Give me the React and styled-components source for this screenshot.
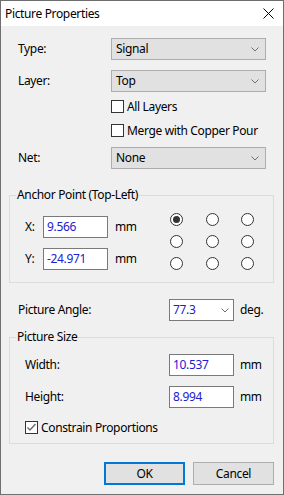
import React from "react";
import styled, { createGlobalStyle } from "styled-components";

const Global = createGlobalStyle`
  html, body { margin: 0; padding: 0; background: #ffffff; }
  body {
    font-family: "Noto Sans", "Open Sans", sans-serif;
    font-size: 12px;
    letter-spacing: -0.35px;
    color: #000;
  }
  * { box-sizing: border-box; }
`;

const Window = styled.div`
  width: 284px;
  height: 495px;
  border: 1px solid #6f6f6f;
  background: #f0f0f0;
  display: flex;
  flex-direction: column;
`;

const TitleBar = styled.div`
  flex: none;
  height: 25px;
  background: #ffffff;
  display: flex;
  align-items: center;
  justify-content: space-between;
  padding: 0 9px 0 4px;
`;

const Title = styled.span`
  line-height: 16px;
`;

const CloseIcon = styled.svg`
  display: block;
  width: 11px;
  height: 11px;
`;

const Body = styled.div`
  flex: 1;
  display: flex;
  flex-direction: column;
  padding: 0 9px 0 8px;
`;

const FieldRow = styled.div`
  display: flex;
  align-items: center;
  height: 22px;
  margin-top: ${(p) => p.$mt || 0}px;
  padding-left: ${(p) => p.$indent || 0}px;
`;

const Label = styled.span`
  flex: none;
  width: ${(p) => p.$w}px;
  line-height: 16px;
  white-space: nowrap;
`;

const Combo = styled.div`
  flex: none;
  width: ${(p) => p.$w}px;
  height: 22px;
  display: flex;
  align-items: center;
  justify-content: space-between;
  padding: ${(p) => (p.$edit ? "0 4px 0 3px" : "0 6px 0 4px")};
  background: ${(p) => (p.$edit ? "#ffffff" : "#e1e1e1")};
  border: 1px solid ${(p) => (p.$edit ? "#7a7a7a" : "#adadad")};
  color: ${(p) => (p.$edit ? "#2020d0" : "#000")};
  line-height: 16px;
`;

const TextBox = styled.div`
  flex: none;
  width: 65px;
  height: 22px;
  display: flex;
  align-items: center;
  padding-left: 3px;
  background: #ffffff;
  border: 1px solid #7a7a7a;
  color: #2020d0;
  line-height: 16px;
`;

const Unit = styled.span`
  margin-left: ${(p) => p.$ml || 6}px;
  line-height: 16px;
`;

const CheckRow = styled.div`
  display: flex;
  align-items: center;
  height: 13px;
  margin-top: ${(p) => p.$mt || 0}px;
  margin-left: ${(p) => p.$ml || 0}px;
  gap: 3px;
  line-height: 16px;
  white-space: nowrap;
`;

const CheckBox = styled.span`
  flex: none;
  width: 13px;
  height: 13px;
  border: 1px solid #333333;
  background: #ffffff;
  display: flex;
  align-items: center;
  justify-content: center;
`;

const Group = styled.div`
  border: 1px solid #dcdcdc;
  margin-top: ${(p) => p.$mt || 0}px;
  padding-bottom: ${(p) => p.$pb || 0}px;
`;

const Legend = styled.div`
  width: fit-content;
  margin: -9px 0 0 6px;
  padding: 0 1px;
  background: #f0f0f0;
  line-height: 16px;
  white-space: nowrap;
`;

const AnchorBody = styled.div`
  display: flex;
  align-items: flex-start;
`;

const CoordCol = styled.div`
  flex: none;
  width: 160px;
  padding: 13px 0 0 15px;
  display: flex;
  flex-direction: column;
  gap: 10px;
`;

const RadioGrid = styled.div`
  display: grid;
  grid-template-columns: repeat(3, 13px);
  column-gap: 22.5px;
  row-gap: 9px;
  padding-top: 10px;
`;

const Radio = styled.span`
  width: 13px;
  height: 13px;
  border-radius: 50%;
  border: 1px solid #333333;
  background: #ffffff;
  display: flex;
  align-items: center;
  justify-content: center;
  &::after {
    content: "";
    width: 7px;
    height: 7px;
    border-radius: 50%;
    background: ${(p) => (p.$checked ? "#333333" : "transparent")};
  }
`;

const ButtonBar = styled.div`
  display: flex;
  justify-content: flex-end;
  gap: 8px;
  margin-top: 18px;
`;

const Button = styled.div`
  width: 81px;
  height: 23px;
  display: flex;
  align-items: center;
  justify-content: center;
  background: #e1e1e1;
  border: ${(p) => (p.$default ? "2px solid #0078d7" : "1px solid #adadad")};
  line-height: 16px;
`;

const Chevron = () => (
  <svg width="8" height="5" viewBox="0 0 8 5" style={{ display: "block" }}>
    <polyline points="0.5,0.5 4,4 7.5,0.5" fill="none" stroke="#707070" strokeWidth="1" />
  </svg>
);

const Check = () => (
  <svg width="11" height="11" viewBox="0 0 11 11" style={{ display: "block" }}>
    <polyline points="1.5,5.5 4,8 9.5,2" fill="none" stroke="#6a6a6a" strokeWidth="1.4" />
  </svg>
);

export default function App() {
  const radios = Array.from({ length: 9 }, (_, i) => i);
  return (
    <>
      <Global />
      <Window>
        <TitleBar>
          <Title>Picture Properties</Title>
          <CloseIcon viewBox="0 0 11 11">
            <path d="M0.5 0.5 L10.5 10.5 M10.5 0.5 L0.5 10.5" stroke="#000" strokeWidth="1" />
          </CloseIcon>
        </TitleBar>
        <Body>
          <FieldRow $mt={12} $indent={9}>
            <Label $w={93}>Type:</Label>
            <Combo $w={155}>
              <span>Signal</span>
              <Chevron />
            </Combo>
          </FieldRow>
          <FieldRow $mt={10} $indent={9}>
            <Label $w={93}>Layer:</Label>
            <Combo $w={155}>
              <span>Top</span>
              <Chevron />
            </Combo>
          </FieldRow>
          <CheckRow $mt={8} $ml={102}>
            <CheckBox />
            <span>All Layers</span>
          </CheckRow>
          <CheckRow $mt={11} $ml={102}>
            <CheckBox />
            <span>Merge with Copper Pour</span>
          </CheckRow>
          <FieldRow $mt={10} $indent={9}>
            <Label $w={93}>Net:</Label>
            <Combo $w={155}>
              <span>None</span>
              <Chevron />
            </Combo>
          </FieldRow>

          <Group $mt={26} $pb={12}>
            <Legend>Anchor Point (Top-Left)</Legend>
            <AnchorBody>
              <CoordCol>
                <FieldRow>
                  <Label $w={18}>X:</Label>
                  <TextBox>9.566</TextBox>
                  <Unit $ml={7}>mm</Unit>
                </FieldRow>
                <FieldRow>
                  <Label $w={18}>Y:</Label>
                  <TextBox>-24.971</TextBox>
                  <Unit $ml={7}>mm</Unit>
                </FieldRow>
              </CoordCol>
              <RadioGrid>
                {radios.map((i) => (
                  <Radio key={i} $checked={i === 0} />
                ))}
              </RadioGrid>
            </AnchorBody>
          </Group>

          <FieldRow $mt={16} $indent={9}>
            <Label $w={151}>Picture Angle:</Label>
            <Combo $w={65} $edit>
              <span>77.3</span>
              <Chevron />
            </Combo>
            <Unit $ml={6}>deg.</Unit>
          </FieldRow>

          <Group $mt={16} $pb={9}>
            <Legend>Picture Size</Legend>
            <FieldRow $mt={9} $indent={15}>
              <Label $w={144}>Width:</Label>
              <TextBox>10.537</TextBox>
              <Unit $ml={6}>mm</Unit>
            </FieldRow>
            <FieldRow $mt={10} $indent={15}>
              <Label $w={144}>Height:</Label>
              <TextBox>8.994</TextBox>
              <Unit $ml={6}>mm</Unit>
            </FieldRow>
            <CheckRow $mt={13} $ml={15}>
              <CheckBox>
                <Check />
              </CheckBox>
              <span>Constrain Proportions</span>
            </CheckRow>
          </Group>

          <ButtonBar>
            <Button $default>OK</Button>
            <Button>Cancel</Button>
          </ButtonBar>
        </Body>
      </Window>
    </>
  );
}
